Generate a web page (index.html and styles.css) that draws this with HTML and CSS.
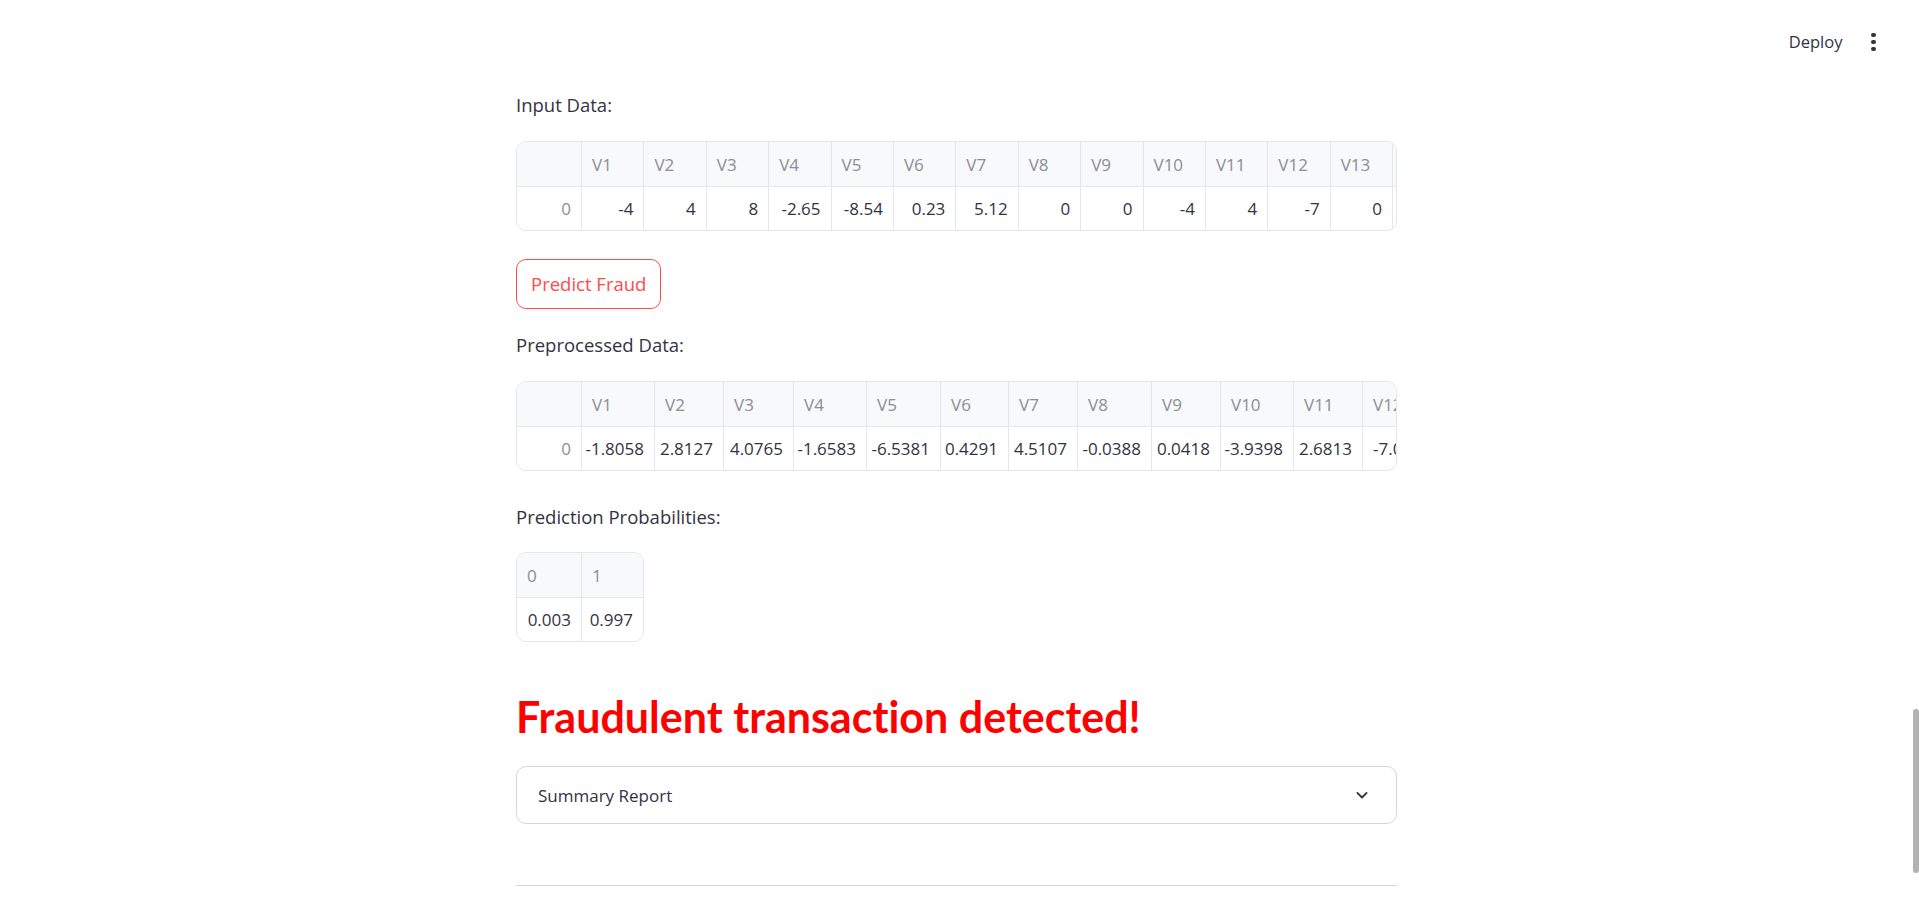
FILE: index.html
```html
<!DOCTYPE html>
<html lang="en">
<head>
<meta charset="utf-8">
<title>Fraud Detection</title>
<link rel="stylesheet" href="styles.css">
</head>
<body>
<header class="topbar">
  <span class="deploy">Deploy</span>
  <span class="kebab"><i></i><i></i><i></i></span>
</header>
<main class="main">
  <p class="label first">Input Data:</p>
  <div class="df">
    <div class="row head">
      <div class="c idx"></div>
      <div class="c">V1</div><div class="c">V2</div><div class="c">V3</div><div class="c">V4</div>
      <div class="c">V5</div><div class="c">V6</div><div class="c">V7</div><div class="c">V8</div>
      <div class="c">V9</div><div class="c">V10</div><div class="c">V11</div><div class="c">V12</div>
      <div class="c">V13</div><div class="c"></div>
    </div>
    <div class="row">
      <div class="c idx">0</div>
      <div class="c">-4</div><div class="c">4</div><div class="c">8</div><div class="c">-2.65</div>
      <div class="c">-8.54</div><div class="c">0.23</div><div class="c">5.12</div><div class="c">0</div>
      <div class="c">0</div><div class="c">-4</div><div class="c">4</div><div class="c">-7</div>
      <div class="c">0</div><div class="c"></div>
    </div>
  </div>

  <button class="btn" type="button">Predict Fraud</button>

  <p class="label">Preprocessed Data:</p>
  <div class="df">
    <div class="row head">
      <div class="c idx"></div>
      <div class="c w73">V1</div><div class="c w69">V2</div><div class="c w70">V3</div><div class="c w73">V4</div>
      <div class="c w74">V5</div><div class="c w68">V6</div><div class="c w69">V7</div><div class="c w74">V8</div>
      <div class="c w69">V9</div><div class="c w73">V10</div><div class="c w69">V11</div><div class="c w73">V12</div>
    </div>
    <div class="row">
      <div class="c idx">0</div>
      <div class="c w73">-1.8058</div><div class="c w69">2.8127</div><div class="c w70">4.0765</div><div class="c w73">-1.6583</div>
      <div class="c w74">-6.5381</div><div class="c w68">0.4291</div><div class="c w69">4.5107</div><div class="c w74">-0.0388</div>
      <div class="c w69">0.0418</div><div class="c w73">-3.9398</div><div class="c w69">2.6813</div><div class="c w73 lft">-7.0342</div>
    </div>
  </div>

  <p class="label gap30">Prediction Probabilities:</p>
  <div class="df small">
    <div class="row head">
      <div class="c w64 nob">0</div><div class="c w62">1</div>
    </div>
    <div class="row">
      <div class="c w64 nob">0.003</div><div class="c w62">0.997</div>
    </div>
  </div>

  <h2 class="alert">Fraudulent transaction detected!</h2>

  <div class="expander">
    <span class="exp-title">Summary Report</span>
    <svg class="chev" width="20" height="20" viewBox="0 0 24 24" aria-hidden="true"><path d="M6.5 9.5l5.5 5.5 5.5-5.5" fill="none" stroke="#31333f" stroke-width="2.2" stroke-linecap="round" stroke-linejoin="round"/></svg>
  </div>

  <hr class="rule">
</main>
<div class="scrollthumb"></div>
</body>
</html>
```
FILE: styles.css
```css
html, body {
  margin: 0;
  padding: 0;
  background: #ffffff;
  overflow: hidden;
}
body {
  font-family: "Open Sans", "Noto Sans", sans-serif;
  color: #31333f;
  height: 904px;
}

/* top bar */
.topbar {
  height: 84px;
  display: flex;
  align-items: center;
  justify-content: flex-end;
  padding-right: 42px;
  gap: 28px;
}
.deploy {
  font-size: 16.5px;
  color: #31333f;
  line-height: 1;
}
.kebab {
  display: flex;
  flex-direction: column;
  gap: 2.6px;
  padding: 0 1px;
}
.kebab i {
  display: block;
  width: 4.6px;
  height: 4.6px;
  border-radius: 50%;
  background: #31333f;
}

/* main column */
.main {
  width: 881px;
  margin-left: 516px;
  display: flex;
  flex-direction: column;
  align-items: flex-start;
}
.label {
  margin: 20px 0 0;
  font-size: 18.5px;
  line-height: 32px;
}
.label.first { margin-top: 5px; }
.label.gap30 { margin-top: 30px; }

/* dataframe */
.df {
  box-sizing: border-box;
  width: 881px;
  margin-top: 20px;
  border: 1px solid #e4e6eb;
  border-radius: 10px;
  overflow: hidden;
  font-size: 17px;
}
.df.small {
  width: auto;
  margin-top: 19px;
}
.row {
  display: flex;
  height: 43px;
  white-space: nowrap;
}
.row.head {
  height: 44px;
  background: #f8f9fb;
  border-bottom: 1px solid #e4e6eb;
  color: #8b8d98;
}
.c {
  box-sizing: border-box;
  flex: none;
  width: 62.4px;
  padding: 0 10px;
  border-left: 1px solid #e4e6eb;
  display: flex;
  align-items: center;
  justify-content: flex-end;
  overflow: hidden;
}
.head .c { justify-content: flex-start; }
.c.idx {
  width: 64px;
  border-left: none;
  color: #8b8d98;
}
.c.lft { justify-content: flex-start; }
.c.nob { border-left: none; }
.w62 { width: 62px; }
.w64 { width: 64px; }
.w68 { width: 68px; }
.w69 { width: 69px; }
.w70 { width: 70px; }
.w73 { width: 73px; }
.w74 { width: 74px; }

/* button */
.btn {
  margin-top: 28px;
  box-sizing: border-box;
  height: 50px;
  padding: 0 14px;
  border: 1px solid #ff4b4b;
  border-radius: 10px;
  background: #ffffff;
  color: #ff4b4b;
  font-family: inherit;
  font-size: 18.5px;
  line-height: 1;
  cursor: pointer;
}

/* alert heading */
.alert {
  margin: 48px 0 0;
  font-family: Lato, "Open Sans", sans-serif;
  font-size: 43px;
  line-height: 54px;
  font-weight: 700;
  font-variant-ligatures: none;
  font-feature-settings: "liga" 0;
  color: #ff0000;
  white-space: nowrap;
}

/* expander */
.expander {
  box-sizing: border-box;
  margin-top: 22px;
  width: 881px;
  height: 58px;
  border: 1px solid #d6d6d9;
  border-radius: 10px;
  display: flex;
  align-items: center;
  justify-content: space-between;
  padding: 0 24px 0 21px;
}
.exp-title {
  font-size: 17px;
  color: #31333f;
}
.chev { display: block; }

.rule {
  margin: 61px 0 0;
  width: 881px;
  height: 0;
  border: none;
  border-top: 1px solid #d6d6d9;
}

/* overlay scrollbar thumb */
.scrollthumb {
  position: absolute;
  right: 0;
  top: 709px;
  width: 6px;
  height: 164px;
  border-radius: 3px;
  background: #b1b1b6;
}
```
